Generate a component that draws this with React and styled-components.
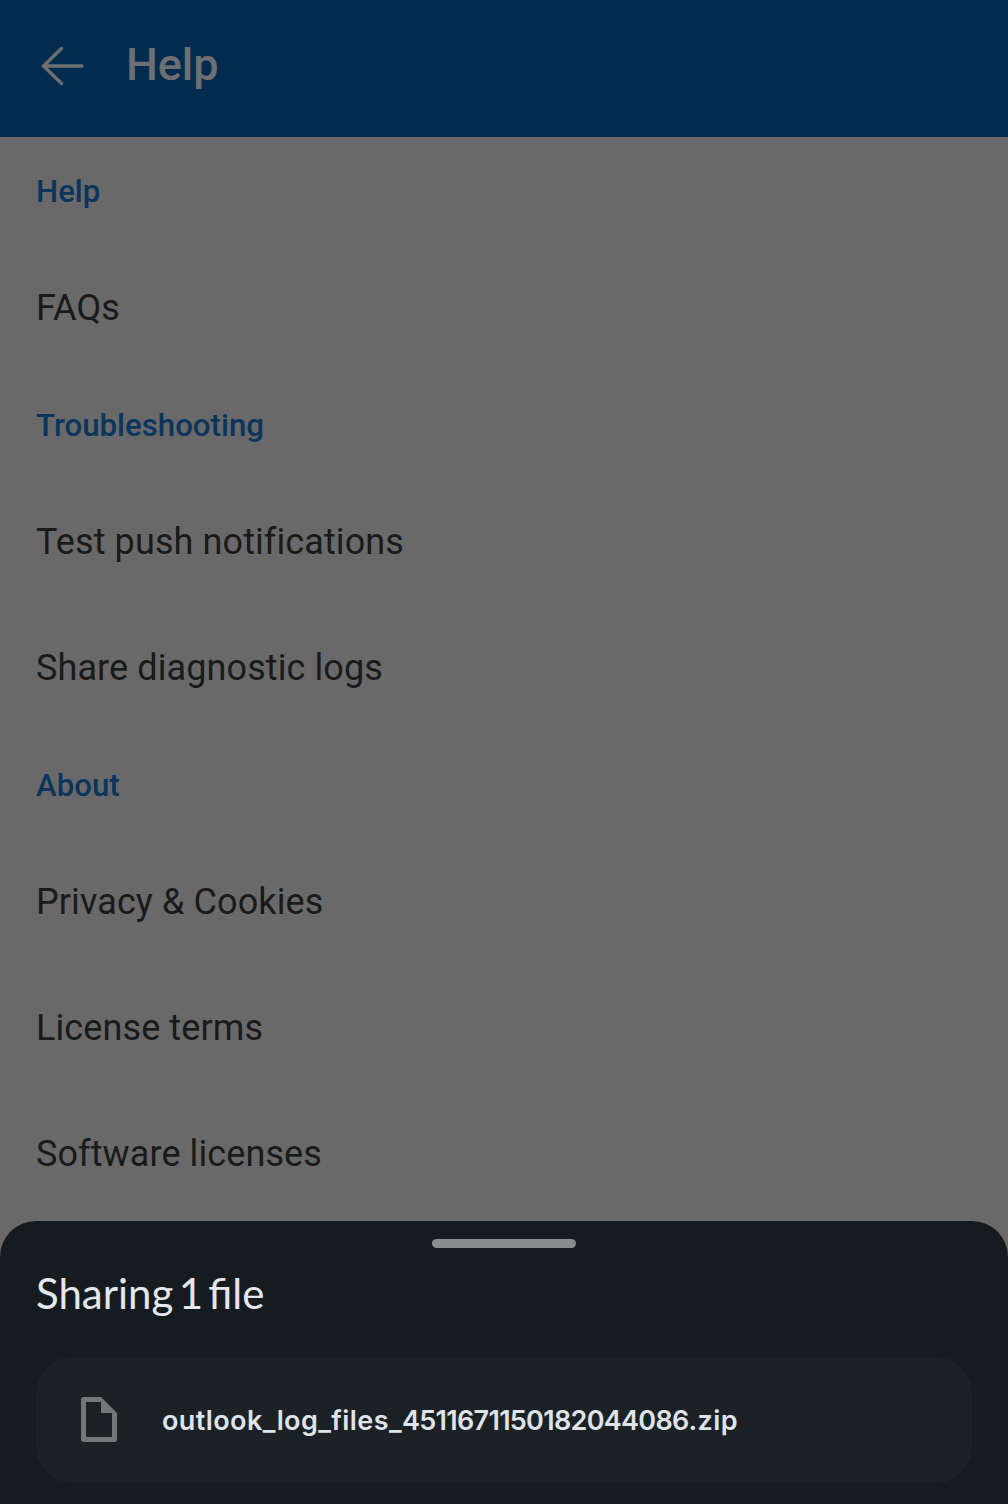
import React from 'react'
import styled, { createGlobalStyle } from 'styled-components'

const Global = createGlobalStyle`
  html, body {
    margin: 0;
    padding: 0;
    background: #696969;
  }
`

const Page = styled.div`
  position: relative;
  width: 1008px;
  height: 1504px;
  overflow: hidden;
  background: #696969;
  font-family: Roboto, sans-serif;
`

const Header = styled.header`
  display: flex;
  align-items: center;
  height: 137px;
  padding: 0 0 8px 36px;
  box-sizing: border-box;
  background: #052c4f;
`

const BackIcon = styled.svg`
  width: 54px;
  height: 54px;
  flex: none;
`

const Title = styled.h1`
  margin: 0 0 0 36px;
  font-size: 45px;
  font-weight: 500;
  letter-spacing: -0.1px;
  color: #6c6f73;
`

const SectionTitle = styled.div`
  display: flex;
  align-items: center;
  height: 108px;
  padding-left: 36px;
  font-size: 31.2px;
  font-weight: 500;
  color: #0b355c;
`

const Item = styled.div`
  display: flex;
  align-items: center;
  height: 126px;
  padding-left: 36px;
  font-size: 36px;
  letter-spacing: 0.1px;
  color: #191a1a;
`

const Sheet = styled.section`
  position: absolute;
  left: 0;
  right: 0;
  bottom: 0;
  height: 283px;
  box-sizing: border-box;
  padding: 18px 36px 21px;
  display: flex;
  flex-direction: column;
  background: #161b1f;
  border-radius: 36px 36px 0 0;
`

const Handle = styled.div`
  align-self: center;
  flex: none;
  width: 144px;
  height: 9px;
  border-radius: 5px;
  background: #8a8c8e;
`

const SheetTitle = styled.h2`
  margin: 19px 0 0;
  height: 90px;
  font-family: Lato, sans-serif;
  font-size: 42px;
  line-height: 52px;
  font-weight: 400;
  word-spacing: -5.5px;
  color: #e4e7ee;
`

const FileCard = styled.div`
  display: flex;
  align-items: center;
  height: 126px;
  padding-left: 36px;
  border-radius: 36px;
  background: #1c2125;
`

const FileIcon = styled.svg`
  width: 54px;
  height: 54px;
  flex: none;
`

const FileName = styled.span`
  margin-left: 36px;
  font-family: Inter, sans-serif;
  font-size: 27px;
  font-weight: 600;
  letter-spacing: 0.4px;
  color: #dfe3ea;
`

const FileDigits = styled.span`
  letter-spacing: -0.7px;
`

const rowsTop = [
  { section: 'Help', items: ['FAQs'] },
  { section: 'Troubleshooting', items: ['Test push notifications', 'Share diagnostic logs'] },
  { section: 'About', items: ['Privacy & Cookies', 'License terms', 'Software licenses'] },
]

export default function App() {
  return (
    <Page>
      <Global />
      <Header>
        <BackIcon viewBox="0 0 54 54" fill="none" stroke="#6c6f73" strokeWidth="3.4" strokeLinecap="round" strokeLinejoin="round">
          <path d="M46 28H8" />
          <path d="M25.5 10.5L7.5 28l18 17.5" />
        </BackIcon>
        <Title>Help</Title>
      </Header>
      {rowsTop.map((group) => (
        <div key={group.section}>
          <SectionTitle>{group.section}</SectionTitle>
          {group.items.map((item) => (
            <Item key={item}>{item}</Item>
          ))}
        </div>
      ))}
      <Sheet>
        <Handle />
        <SheetTitle>Sharing 1 file</SheetTitle>
        <FileCard>
          <FileIcon viewBox="0 0 54 54">
            <path
              fill="#757678"
              fillRule="evenodd"
              d="M12 4h17l16 16v26a3 3 0 0 1-3 3H12a3 3 0 0 1-3-3V7a3 3 0 0 1 3-3zM14 9v35h26V20H29V9z"
            />
          </FileIcon>
          <FileName>
            outlook_log_files_<FileDigits>4511671150182044086</FileDigits>.zip
          </FileName>
        </FileCard>
      </Sheet>
    </Page>
  )
}
